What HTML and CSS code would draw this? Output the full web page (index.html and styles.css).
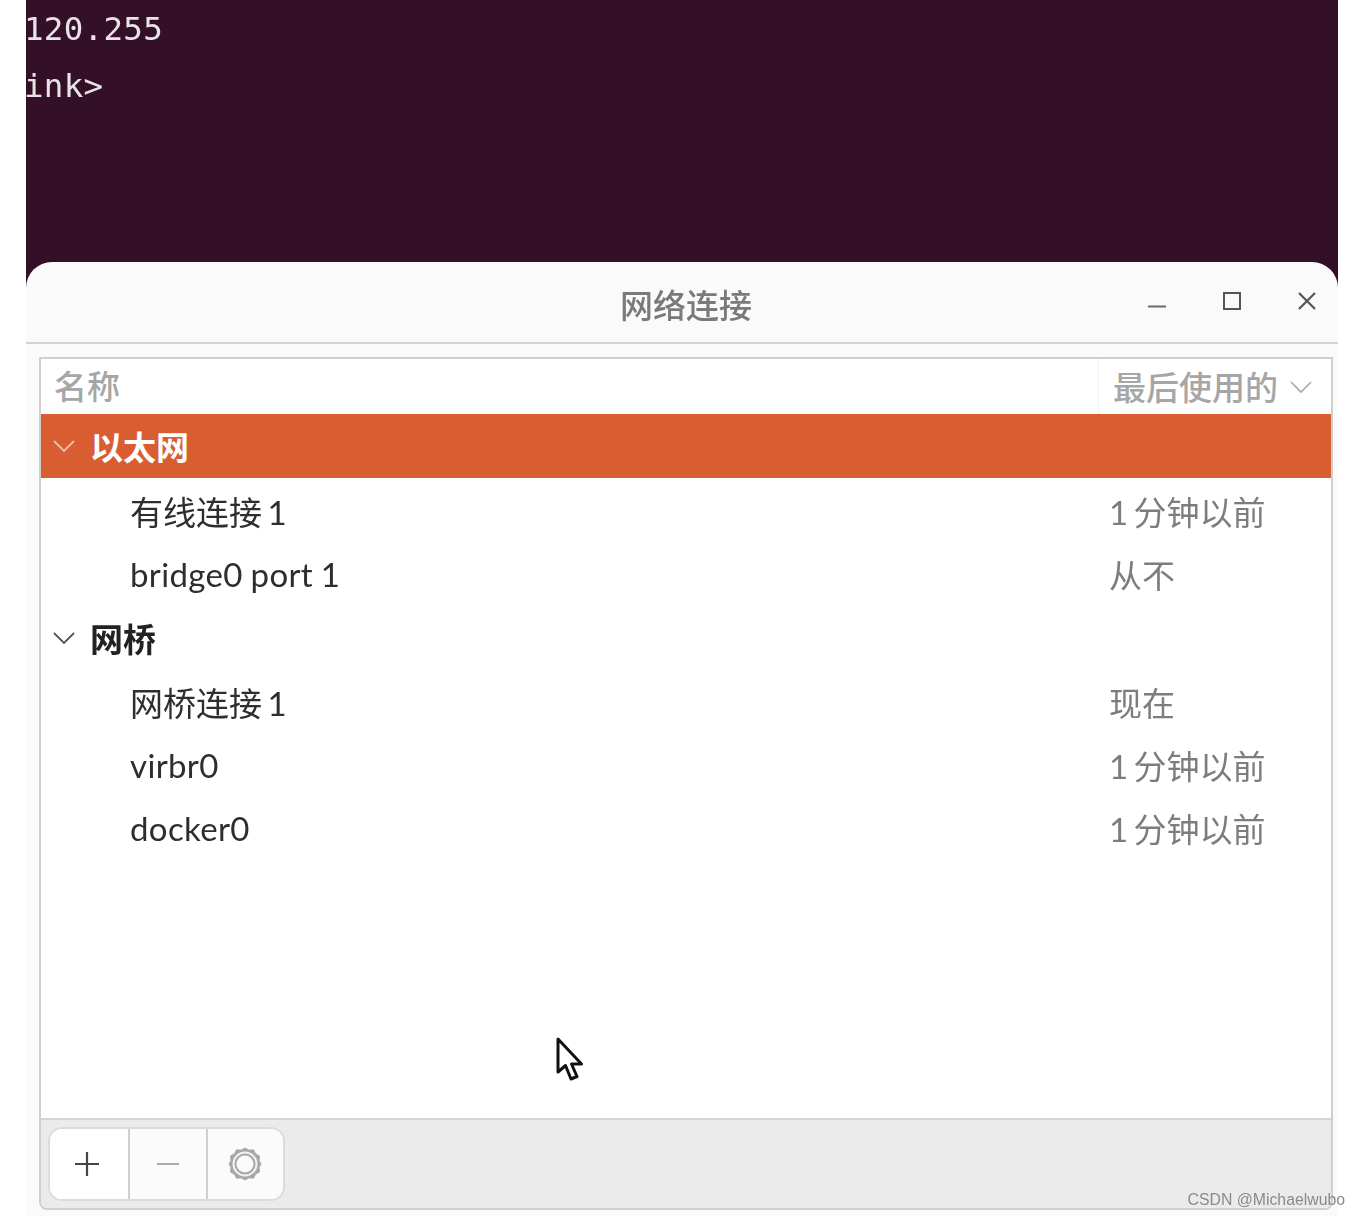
FILE: index.html
```html
<!DOCTYPE html>
<html lang="zh-CN">
<head>
<meta charset="utf-8">
<title>网络连接</title>
<link rel="stylesheet" href="styles.css">
</head>
<body>
<div class="desktop">
  <div class="terminal">
    <div class="term-line">120.255</div>
    <div class="term-line">ink&gt;</div>
  </div>
  <div class="window">
    <header class="titlebar">
      <div class="title">网络连接</div>
      <div class="controls">
        <svg class="ctl" width="24" height="24" viewBox="0 0 24 24"><path d="M3 17.5H21" stroke="#6a6a6a" stroke-width="2" fill="none"/></svg>
        <svg class="ctl" width="24" height="24" viewBox="0 0 24 24"><rect x="4" y="4" width="16" height="16" stroke="#555" stroke-width="2" fill="none"/></svg>
        <svg class="ctl" width="24" height="24" viewBox="0 0 24 24"><path d="M4 4L20 20M20 4L4 20" stroke="#555" stroke-width="2.2" fill="none"/></svg>
      </div>
    </header>
    <div class="content">
      <div class="frame">
        <div class="list-head">
          <div class="col-name">名称</div>
          <div class="col-used">最后使用的
            <svg class="chev-h" width="24" height="14" viewBox="0 0 24 14"><path d="M2 2L12 12L22 2" stroke="#aaa" stroke-width="1.6" fill="none"/></svg>
          </div>
        </div>
        <div class="list">
          <div class="row group selected h64">
            <svg class="chev" width="24" height="14" viewBox="0 0 24 14"><path d="M2 2L12 12L22 2" stroke="#eebfa8" stroke-width="1.8" fill="none"/></svg>
            <span class="group-name">以太网</span>
          </div>
          <div class="row item h65"><span class="name">有线连接 1</span><span class="used">1 分钟以前</span></div>
          <div class="row item h62"><span class="name latin">bridge0 port 1</span><span class="used">从不</span></div>
          <div class="row group h65">
            <svg class="chev" width="24" height="14" viewBox="0 0 24 14"><path d="M2 2L12 12L22 2" stroke="#555" stroke-width="1.8" fill="none"/></svg>
            <span class="group-name">网桥</span>
          </div>
          <div class="row item h64"><span class="name">网桥连接 1</span><span class="used">现在</span></div>
          <div class="row item h62"><span class="name latin">virbr0</span><span class="used">1 分钟以前</span></div>
          <div class="row item h64"><span class="name latin">docker0</span><span class="used">1 分钟以前</span></div>
        </div>
        <div class="toolbar">
          <div class="btn-group">
            <button class="btn first" type="button"><svg width="28" height="28" viewBox="0 0 28 28"><path d="M14 2V26M2 14H26" stroke="#444" stroke-width="2.2" fill="none"/></svg></button>
            <button class="btn off" type="button"><svg width="28" height="28" viewBox="0 0 28 28"><path d="M3 14H25" stroke="#aaa" stroke-width="2.2" fill="none"/></svg></button>
            <button class="btn off" type="button"><svg width="38" height="38" viewBox="0 0 38 38"><path d="M19 3L23 5.2L27.500 4.800L29.500 8.800L33.500 11L33 15.500L35 19L33 22.500L33.500 27L29.500 29.200L27.500 33.200L23 32.800L19 35L15 32.800L10.500 33.200L8.500 29.200L4.500 27L5 22.500L3 19L5 15.500L4.500 11L8.500 8.800L10.500 4.800L15 5.200Z" fill="#a8a8a8" stroke="#a8a8a8" stroke-width="1" stroke-linejoin="round"/><circle cx="19" cy="19" r="12.500" fill="#f2f2f2"/><circle cx="19" cy="19" r="10.500" fill="#a8a8a8"/><circle cx="19" cy="19" r="8.500" fill="#fafafa"/></svg></button>
          </div>
        </div>
      </div>
    </div>
  </div>
  <svg class="cursor" width="30" height="46" viewBox="0 0 30 46"><path d="M3 2V35L10.500 28.500L16 42L22 39.500L16.500 27H26.500Z" fill="#fff" stroke="#111" stroke-width="3" stroke-linejoin="round"/></svg>
  <div class="watermark">CSDN @Michaelwubo</div>
</div>
</body>
</html>
```
FILE: styles.css
```css
* { box-sizing: border-box; }
html, body { margin: 0; padding: 0; background: #fff; }
body {
  font-family: "Lato", "Noto Sans CJK SC", sans-serif;
  font-size: 33px;
  color: #2e2e2e;
}
.desktop {
  position: relative;
  width: 1360px;
  height: 1216px;
  padding: 0 22px 0 26px;
  overflow: hidden;
  filter: blur(0.5px);
}
.terminal {
  height: 290px;
  background: #330f28;
  color: #e8e4e6;
  font-family: "DejaVu Sans Mono", monospace;
  font-size: 32.500px;
  letter-spacing: 0.3px;
  line-height: 57px;
  padding-top: 1px;
  text-indent: -2px;
  overflow: hidden;
}
.window {
  margin-top: -28px;
  height: 954px;
  background: #fafafa;
  border-radius: 26px 26px 0 0;
  display: flex;
  flex-direction: column;
}
.titlebar {
  height: 82px;
  flex: none;
  border-bottom: 2px solid #d4d4d4;
  position: relative;
  display: flex;
  align-items: center;
  justify-content: center;
}
.title {
  font-family: "Noto Sans CJK SC", sans-serif;
  font-size: 33px;
  font-weight: 500;
  color: #7a7a7a;
  margin: 4px 0 0 8px;
}
.controls {
  position: absolute;
  right: 19px;
  top: 27px;
  display: flex;
  gap: 51px;
}
.ctl { display: block; }
.content {
  flex: 1;
  padding: 13px 5px 6px 13px;
  display: flex;
  min-height: 0;
}
.frame {
  flex: 1;
  border: 2px solid #cfcfcf;
  border-radius: 0 0 8px 8px;
  display: flex;
  flex-direction: column;
  background: #fff;
}
.list-head {
  height: 55px;
  flex: none;
  display: flex;
  justify-content: space-between;
  color: #a6a6a6;
  font-family: "Noto Sans CJK SC", sans-serif;
  font-weight: 500;
  line-height: 53px;
}
.col-name { padding-left: 13px; }
.col-used {
  width: 233px;
  padding-left: 14px;
  border-left: 1px solid #f2f2f2;
  display: flex;
  align-items: center;
  gap: 11px;
}
.list { flex: 1; min-height: 0; }
.row {
  display: flex;
  align-items: center;
  position: relative;
}
.h64 { height: 64px; }
.h65 { height: 65px; }
.h62 { height: 62px; }
.group { padding-left: 11px; gap: 14px; font-weight: 700; color: #222; }
.group-name { font-family: "Noto Sans CJK SC", sans-serif; }
.selected { background: #d85e32; color: #fff; }
.item { padding-left: 89px; justify-content: space-between; }
.name { color: #2e2e2e; word-spacing: -3px; }
.name.latin { letter-spacing: 0.35px; word-spacing: -1px; }
.used { width: 222px; color: #7d7d7d; word-spacing: -3px; }
.chev, .chev-h { display: block; flex: none; }
.toolbar {
  height: 90px;
  flex: none;
  background: #ebebeb;
  border-top: 2px solid #d4d4d4;
  border-radius: 0 0 6px 6px;
  padding: 7px;
}
.btn-group {
  width: 237px;
  height: 74px;
  display: flex;
  background: #fff;
  border: 2px solid #dcdcdc;
  border-radius: 14px;
  overflow: hidden;
}
.btn {
  flex: 1;
  border: 0;
  padding: 0;
  background: #fff;
  display: flex;
  align-items: center;
  justify-content: center;
}
.btn.first { flex: none; width: 78px; padding-right: 4px; }
.btn.off { background: #fbfbfb; border-left: 2px solid #cfcfcf; }
.cursor { position: absolute; left: 555px; top: 1037px; }
.watermark {
  position: absolute;
  right: 15px;
  top: 1190px;
  font-family: "Liberation Sans", sans-serif;
  font-size: 15.800px;
  line-height: 20px;
  color: #8a8a8a;
}
```
